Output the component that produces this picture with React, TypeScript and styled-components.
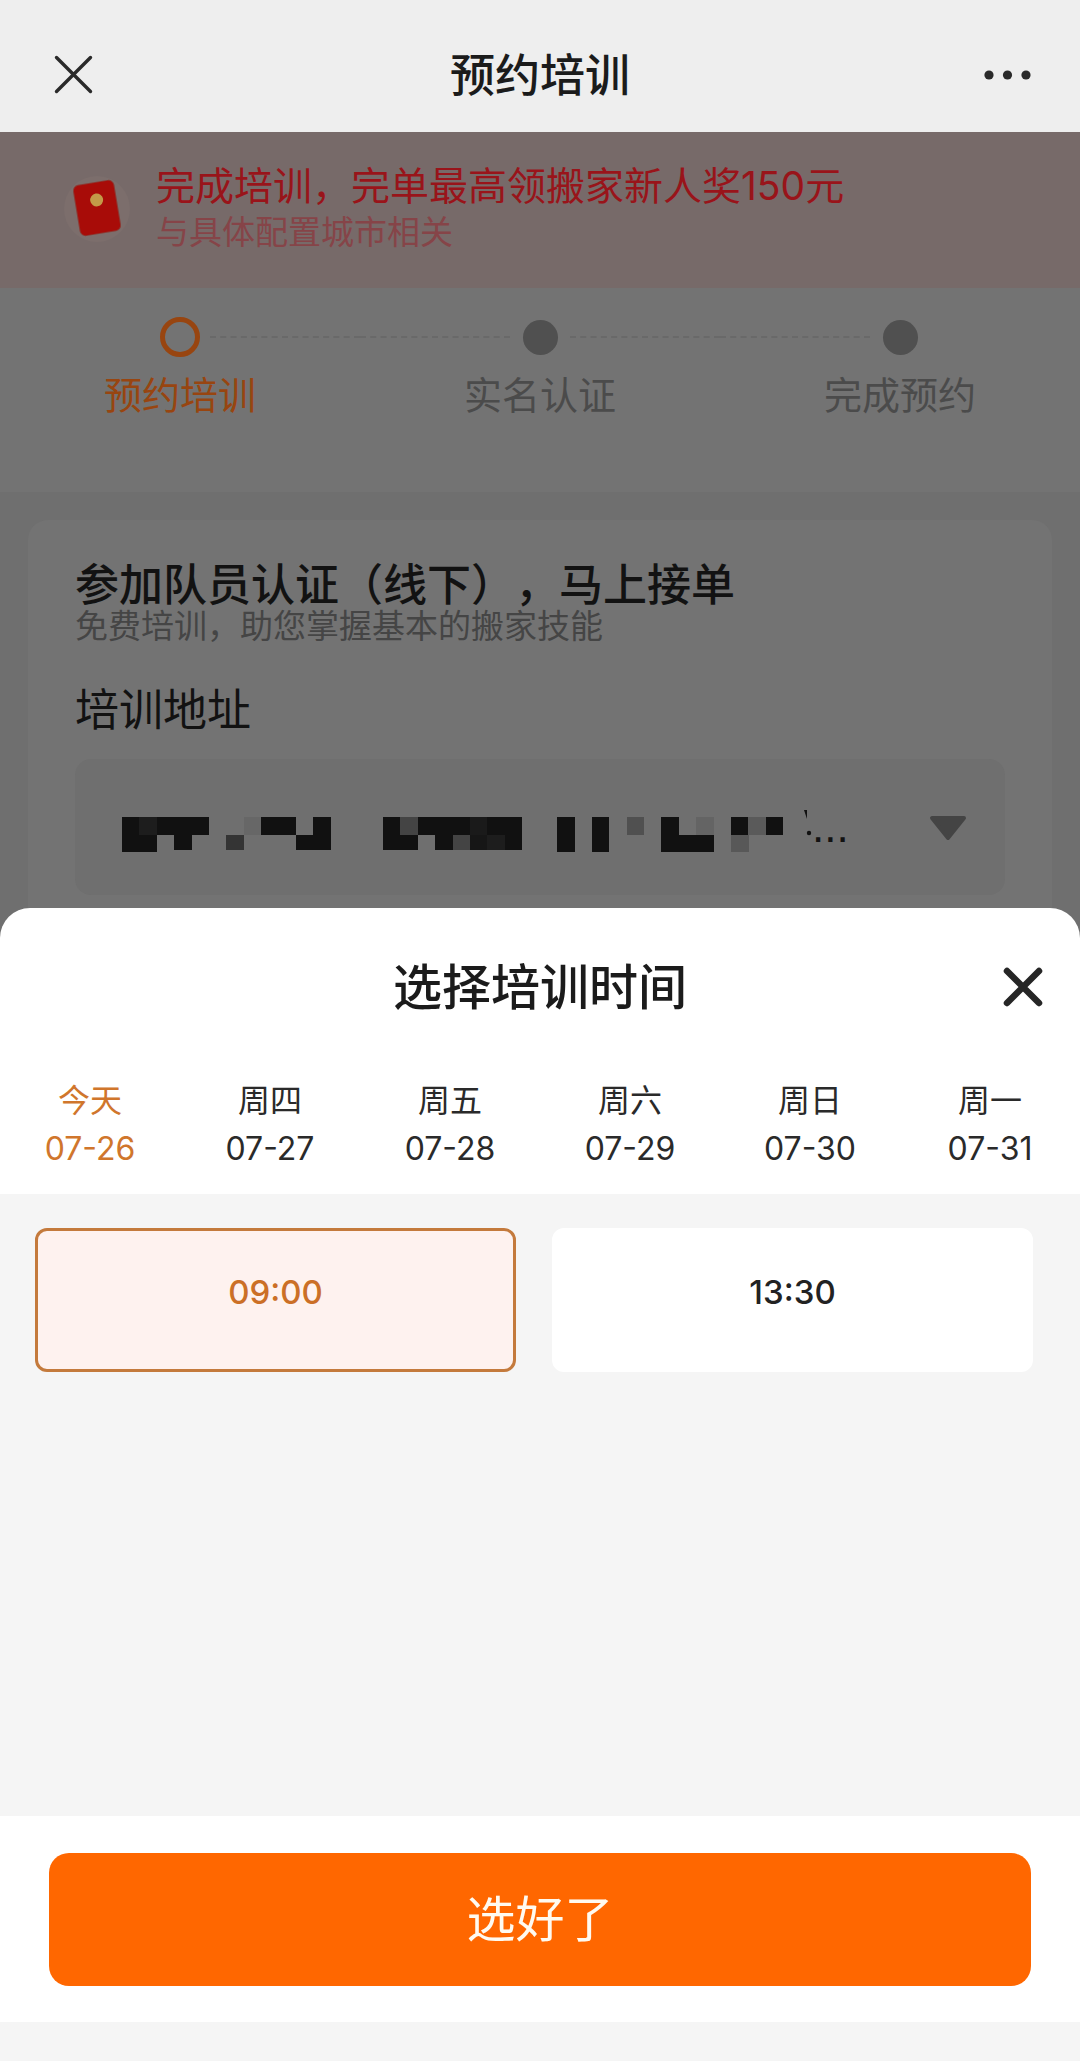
import { useState } from "react";
import styled, { createGlobalStyle } from "styled-components";

const GlobalStyle = createGlobalStyle`
  *, *::before, *::after { box-sizing: border-box; }
  body {
    margin: 0;
    background: #6f6f6f;
    color: #1b1b1b;
    font-family: Inter, "Noto Sans CJK SC", sans-serif;
    text-spacing-trim: space-all;
  }
  h1, h2, h3, p { margin: 0; font-weight: 400; }
  button {
    margin: 0;
    padding: 0;
    border: 0;
    background: none;
    color: inherit;
    font: inherit;
    cursor: pointer;
  }
  svg { display: block; }
`;

const Page = styled.div`
  display: flex;
  flex-direction: column;
  min-height: 100vh;
`;

const NavBar = styled.header`
  display: grid;
  grid-template-columns: 1fr auto 1fr;
  align-items: center;
  height: 132px;
  padding: 18px 48px 0;
  background: #eeeeee;
`;

const NavTitle = styled.h1`
  padding-top: 2px;
  font-size: 45px;
  line-height: 60px;
  font-weight: 500;
`;

const IconButton = styled.button<{ $end?: boolean }>`
  justify-self: ${(p) => (p.$end ? "end" : "start")};
`;

const Banner = styled.section`
  display: flex;
  align-items: flex-start;
  gap: 24px;
  height: 156px;
  padding: 30px 64px 0;
  background: #776a69;
`;

const BannerIcon = styled.div`
  padding-top: 12px;
`;

const BannerTitle = styled.p`
  font-size: 39px;
  line-height: 48px;
  color: #99141a;
`;

const BannerNote = styled.p`
  font-size: 33px;
  line-height: 44px;
  color: #864448;
`;

const Steps = styled.ol`
  display: grid;
  grid-template-columns: repeat(3, 1fr);
  height: 204px;
  margin: 0;
  padding: 29px 0 0;
  list-style: none;
  background: #737373;
`;

const Step = styled.li<{ $active?: boolean }>`
  display: flex;
  flex-direction: column;
  align-items: center;
  gap: 12px;
  font-size: 38px;
  line-height: 52px;
  color: ${(p) => (p.$active ? "#984510" : "#4b4b4b")};
`;

const StepTrack = styled.div`
  display: grid;
  grid-template-columns: 1fr 40px 1fr;
  gap: 10px;
  align-items: center;
  justify-items: center;
  width: 100%;
  height: 40px;
`;

const StepLine = styled.span<{ $hidden?: boolean }>`
  width: 100%;
  border-top: 2px dashed ${(p) => (p.$hidden ? "transparent" : "#696969")};
`;

const StepDot = styled.span<{ $active?: boolean }>`
  width: ${(p) => (p.$active ? 40 : 35)}px;
  height: ${(p) => (p.$active ? 40 : 35)}px;
  border-radius: 50%;
  border: ${(p) => (p.$active ? "5px solid #984510" : "0")};
  background: ${(p) => (p.$active ? "transparent" : "#505050")};
`;

const Card = styled.section`
  margin: 28px 28px 0;
  padding: 42px 47px 13px;
  border-radius: 20px 20px 0 0;
  background: #737373;
`;

const CardTitle = styled.h2`
  font-size: 44px;
  line-height: 46px;
  font-weight: 500;
  color: #121212;
`;

const CardNote = styled.p`
  font-size: 33px;
  line-height: 36px;
  color: #454545;
`;

const FieldLabel = styled.h3`
  padding: 36px 0 19px;
  font-size: 44px;
  line-height: 60px;
  color: #121212;
`;

const AddressPicker = styled.button`
  display: flex;
  align-items: center;
  width: 100%;
  height: 136px;
  padding: 0 38px 0 47px;
  border-radius: 16px;
  background: #6f6f6f;
  color: #121212;
`;

const Ellipsis = styled.span`
  flex: 1;
  text-align: left;
  font-family: "Liberation Sans", sans-serif;
  font-size: 44px;
  line-height: 52px;
`;

const Sheet = styled.section`
  display: flex;
  flex: 1;
  flex-direction: column;
  border-radius: 30px 30px 0 0;
  background: #ffffff;
`;

const SheetHead = styled.div`
  display: grid;
  grid-template-columns: 1fr auto 1fr;
  align-items: center;
  padding: 46px 36px 0;
`;

const SheetTitle = styled.h2`
  grid-column: 2;
  padding-top: 2px;
  font-size: 49px;
  line-height: 64px;
  font-weight: 500;
`;

const Days = styled.div`
  display: grid;
  grid-template-columns: repeat(6, 1fr);
  padding: 57px 0 21px;
`;

const Day = styled.button<{ $active: boolean }>`
  display: flex;
  flex-direction: column;
  align-items: center;
  font-size: 32px;
  line-height: 48px;
  color: ${(p) => (p.$active ? "#d0762c" : "#2a2a2a")};
`;

const Slots = styled.div`
  display: grid;
  flex: 1;
  grid-template-columns: 1fr 1fr;
  align-content: start;
  gap: 36px;
  padding: 34px 47px 34px 35px;
  background: #f5f5f5;
`;

const Slot = styled.button<{ $active: boolean }>`
  height: 144px;
  padding-bottom: 16px;
  border: 3px solid ${(p) => (p.$active ? "#c47a3c" : "#ffffff")};
  border-radius: 12px;
  background: ${(p) => (p.$active ? "#fef2ef" : "#ffffff")};
  color: ${(p) => (p.$active ? "#cb6f26" : "#222222")};
  font-size: 33px;
  line-height: 48px;
  font-weight: 500;
`;

const Footer = styled.footer`
  padding: 37px 49px 36px;
`;

const Confirm = styled.button`
  width: 100%;
  height: 133px;
  border-radius: 20px;
  background: #ff6700;
  color: #fffaf0;
  font-size: 49px;
  line-height: 64px;
`;

const SafeArea = styled.div`
  height: 39px;
  background: #f5f5f5;
`;

/* Redacted address: [column, row, shade] on a two-row grid */
const K = "#111111";
const mosaic: [number, number, string][] = [
  [0, 0, K], [1, 0, "#1d1d1d"], [2, 0, K], [3, 0, K], [4, 0, K],
  [7, 0, "#676767"], [8, 0, K], [9, 0, K], [11, 0, K],
  [15, 0, K], [16, 0, "#444444"], [17, 0, K], [18, 0, K], [19, 0, K],
  [20, 0, "#1a1a1a"], [21, 0, K], [22, 0, K],
  [25, 0, K], [27, 0, K], [29, 0, "#505050"], [31, 0, K], [33, 0, "#646464"],
  [35, 0, K], [36, 0, "#5a5a5a"], [37, 0, K],
  [0, 1, K], [1, 1, K], [3, 1, K], [6, 1, "#343434"], [10, 1, K], [11, 1, K],
  [15, 1, K], [16, 1, K], [18, 1, K], [19, 1, "#444444"], [20, 1, "#161616"],
  [21, 1, "#1d1d1d"], [22, 1, K],
  [25, 1, K], [27, 1, K], [31, 1, K], [32, 1, K], [33, 1, K], [35, 1, "#585858"],
];

const Mosaic = () => (
  <svg width="690" height="52" viewBox="0 -8 690 52" shapeRendering="crispEdges" aria-hidden="true">
    {mosaic.map(([c, r, fill]) => (
      <rect
        key={`${c}-${r}`}
        x={c * 17.4}
        y={r ? 26 : 8}
        width="17.5"
        height={r ? (c > 1 && c < 24 ? 15 : 17) : 18}
        fill={fill}
      />
    ))}
    <path d="M682 1h3v9z" fill={K} shapeRendering="auto" />
    <circle cx="687" cy="24" r="2.2" fill={K} shapeRendering="auto" />
  </svg>
);

const RedPacket = () => (
  <svg width="68" height="68" viewBox="0 0 68 68" aria-hidden="true">
    <circle cx="33" cy="35" r="33" fill="#7c6e6c" />
    <g transform="rotate(-9.5 33 34)">
      <rect x="12" y="8" width="42" height="52" rx="6" fill="#8c3a34" />
      <rect x="13" y="9" width="40" height="50" rx="5" fill="#a80c08" />
      <circle cx="34" cy="26" r="6.5" fill="#c39a48" />
    </g>
  </svg>
);

const steps = ["预约培训", "实名认证", "完成预约"];
const days = [
  ["今天", "07-26"],
  ["周四", "07-27"],
  ["周五", "07-28"],
  ["周六", "07-29"],
  ["周日", "07-30"],
  ["周一", "07-31"],
];
const slots = ["09:00", "13:30"];

export default function App() {
  const [day, setDay] = useState(0);
  const [slot, setSlot] = useState(0);

  return (
    <Page>
      <GlobalStyle />
      <NavBar>
        <IconButton aria-label="返回">
          <svg width="52" height="52" viewBox="0 0 52 52" stroke="#2a2a2a" strokeWidth="3.4" strokeLinecap="round">
            <path d="M8.500 8.500l34 34M42.500 8.500l-34 34" />
          </svg>
        </IconButton>
        <NavTitle>预约培训</NavTitle>
        <IconButton $end aria-label="更多">
          <svg width="52" height="52" viewBox="0 0 52 52" fill="#2a2a2a">
            <circle cx="9" cy="26" r="4.6" />
            <circle cx="27.500" cy="26" r="4.600" />
            <circle cx="46" cy="26" r="4.600" />
          </svg>
        </IconButton>
      </NavBar>

      <Banner>
        <BannerIcon>
          <RedPacket />
        </BannerIcon>
        <div>
          <BannerTitle>完成培训，完单最高领搬家新人奖150元</BannerTitle>
          <BannerNote>与具体配置城市相关</BannerNote>
        </div>
      </Banner>

      <Steps>
        {steps.map((label, i) => (
          <Step key={label} $active={i === 0}>
            <StepTrack>
              <StepLine $hidden={i === 0} />
              <StepDot $active={i === 0} />
              <StepLine $hidden={i === steps.length - 1} />
            </StepTrack>
            {label}
          </Step>
        ))}
      </Steps>

      <Card>
        <CardTitle>参加队员认证（线下），马上接单</CardTitle>
        <CardNote>免费培训，助您掌握基本的搬家技能</CardNote>
        <FieldLabel id="address-label">培训地址</FieldLabel>
        <AddressPicker aria-labelledby="address-label" aria-haspopup="listbox">
          <Mosaic />
          <Ellipsis>...</Ellipsis>
          <svg width="38" height="28" viewBox="0 -3 38 28" aria-hidden="true">
            <path
              d="M3 2h32L19 22z"
              fill="#444444"
              stroke="#444444"
              strokeWidth="4"
              strokeLinejoin="round"
            />
          </svg>
        </AddressPicker>
      </Card>

      <Sheet role="dialog" aria-labelledby="sheet-title">
        <SheetHead>
          <SheetTitle id="sheet-title">选择培训时间</SheetTitle>
          <IconButton $end aria-label="关闭">
            <svg width="42" height="42" viewBox="0 0 42 42" stroke="#262626" strokeWidth="6.500" strokeLinecap="round">
              <path d="M5 5l32 32M37 5L5 37" />
            </svg>
          </IconButton>
        </SheetHead>
        <Days>
          {days.map(([name, date], i) => (
            <Day key={date} $active={i === day} aria-pressed={i === day} onClick={() => setDay(i)}>
              <span>{name}</span>
              <span>{date}</span>
            </Day>
          ))}
        </Days>
        <Slots>
          {slots.map((time, i) => (
            <Slot key={time} $active={i === slot} aria-pressed={i === slot} onClick={() => setSlot(i)}>
              {time}
            </Slot>
          ))}
        </Slots>
        <Footer>
          <Confirm>选好了</Confirm>
        </Footer>
        <SafeArea />
      </Sheet>
    </Page>
  );
}
